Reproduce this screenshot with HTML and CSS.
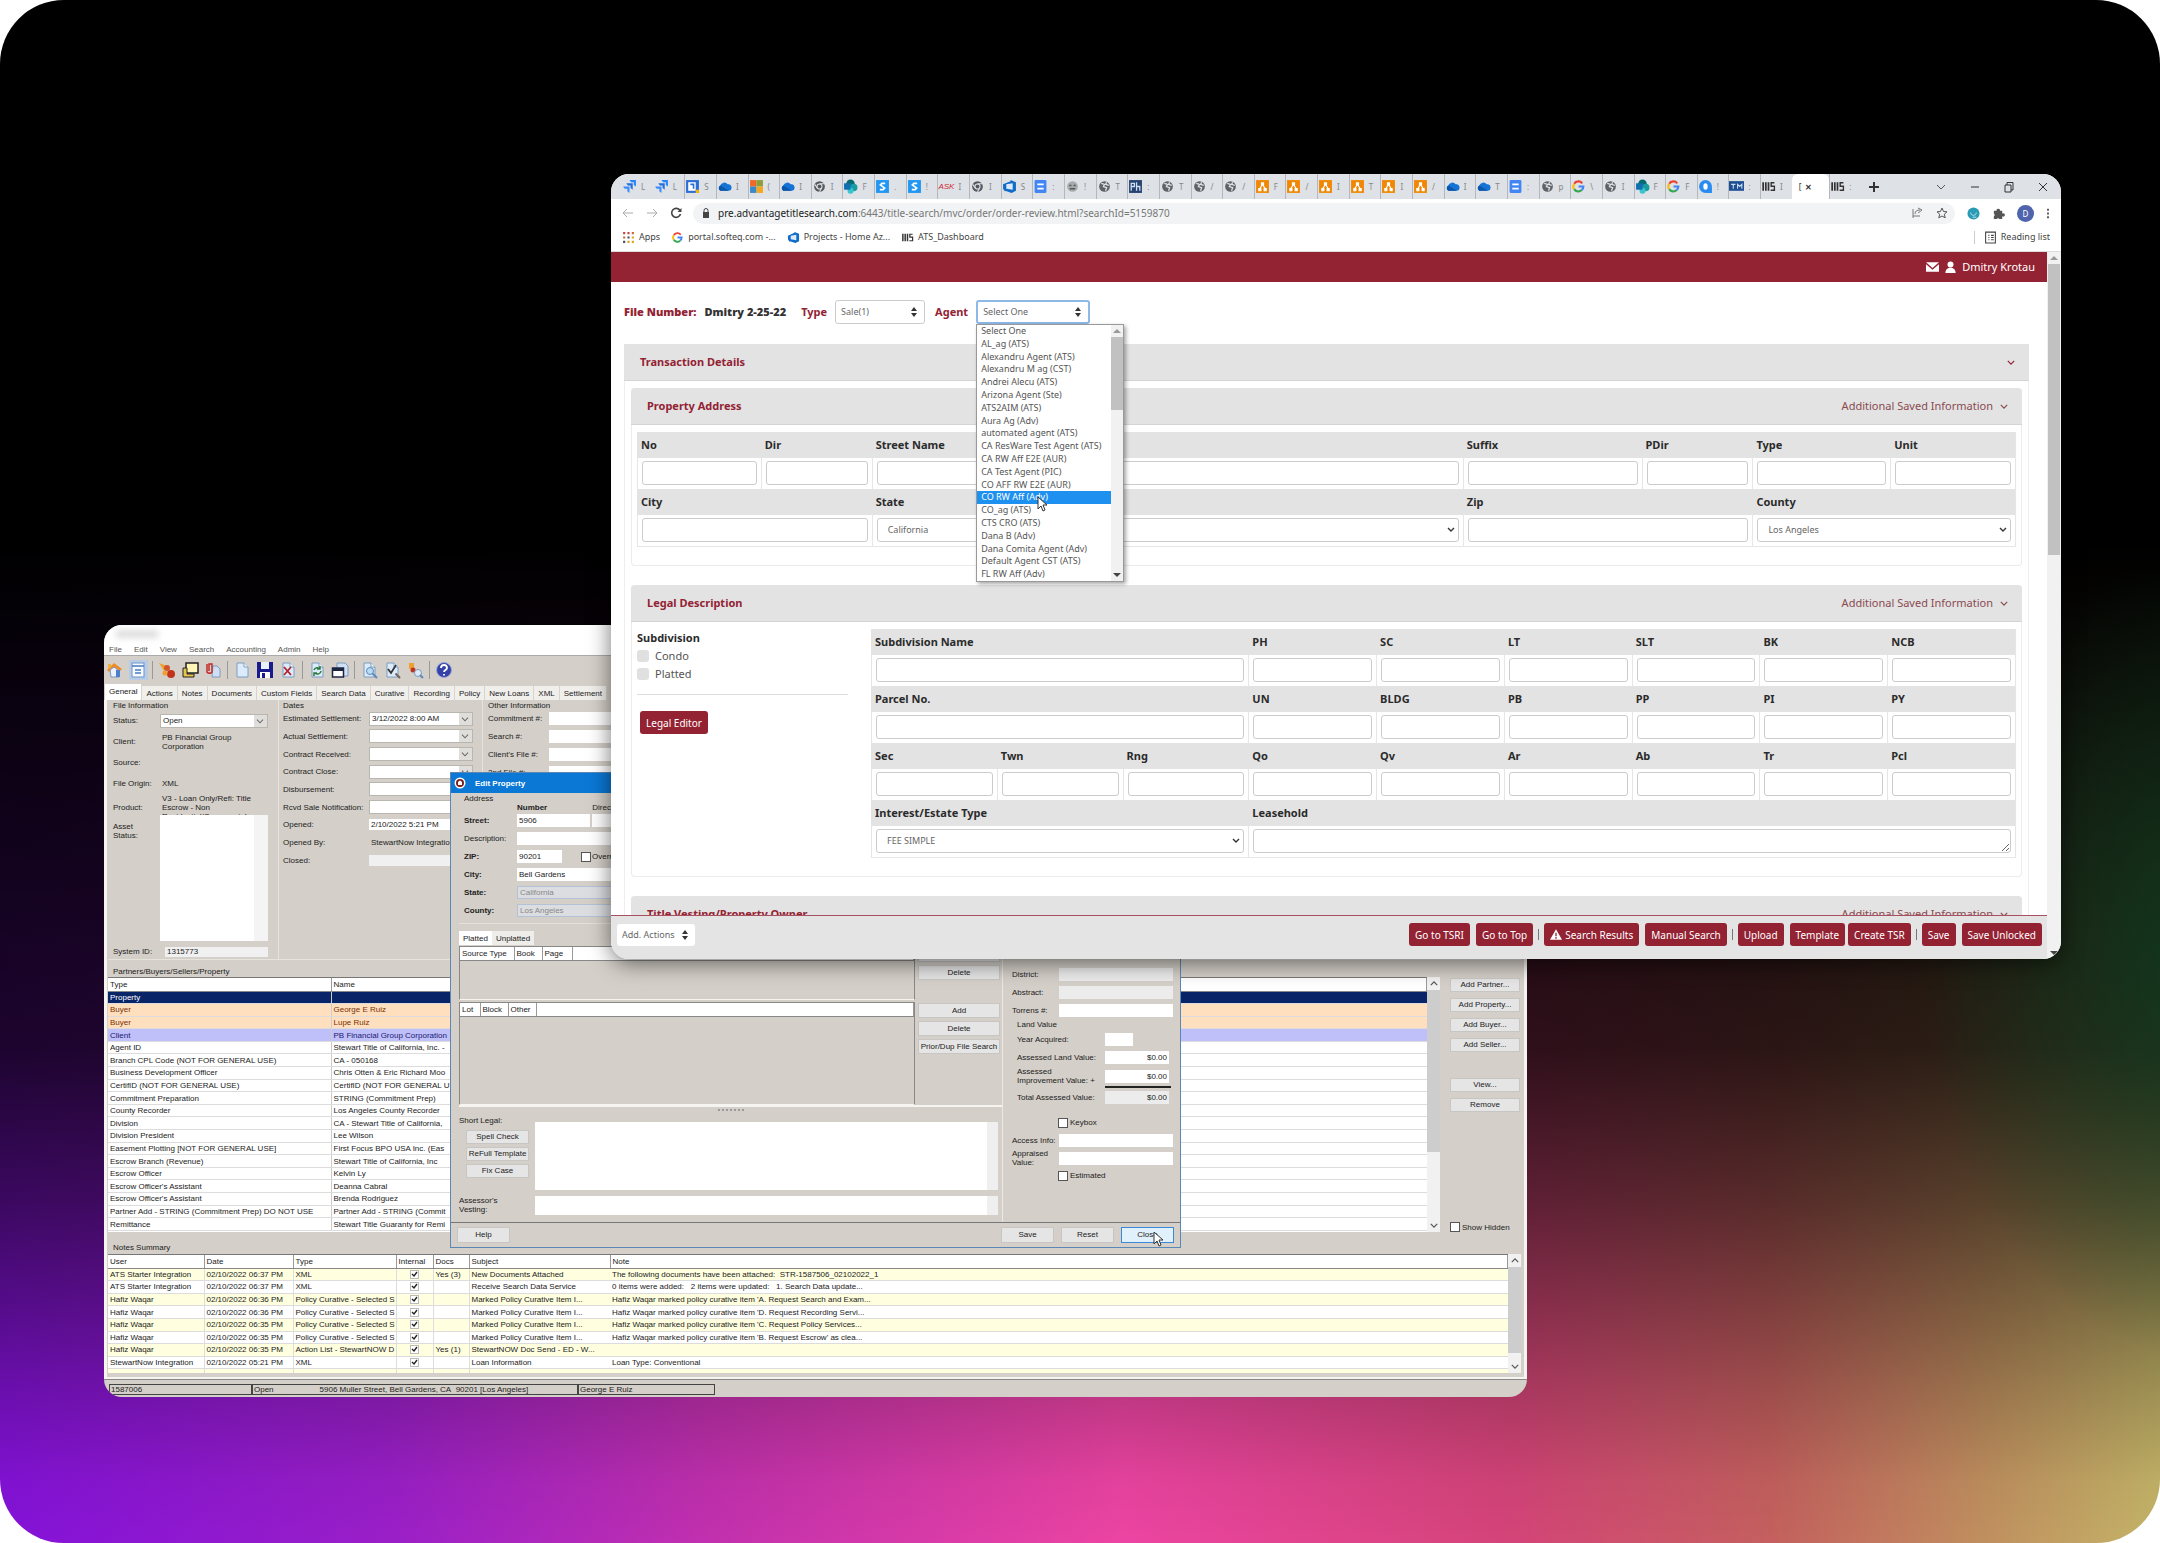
FILE: index.html
```html
<!DOCTYPE html>
<html lang="en">
<head>
<meta charset="utf-8">
<title>Title search</title>
<link rel="stylesheet" href="styles.css">
</head>
<body>
<svg class="defs" aria-hidden="true">
  <symbol id="jira" viewBox="0 0 14 14"><path d="M7 1h6v6l-2-1.500V3H8.500z" fill="#2684ff"/><path d="M4 4h6v6L8 8.500V6H5.500z" fill="#1f6fe0"/><path d="M1 7h6v6L5 11.500V9H2.500z" fill="#3b8cff"/></symbol>
  <symbol id="cal" viewBox="0 0 14 14"><rect x="1" y="1" width="12" height="12" fill="#2b6fd6"/><rect x="3" y="3" width="7" height="8" fill="#fff"/><path d="M5 5h3v4" fill="none" stroke="#2b6fd6" stroke-width="1.500"/><path d="M10 10h3v3h-3z" fill="#f4b400"/></symbol>
  <symbol id="cloud" viewBox="0 0 14 14"><path d="M3 11a3 3 0 0 1 0-5 4 4 0 0 1 7-1 3 3 0 0 1 1 6z" fill="#1473d4"/><path d="M3 11a3 3 0 0 1 0-5l8 5z" fill="#0a56a8"/></symbol>
  <symbol id="ms" viewBox="0 0 14 14"><rect x="1" y="1" width="6" height="6" fill="#f0682a"/><rect x="7" y="1" width="6" height="6" fill="#8d9e3c"/><rect x="1" y="7" width="6" height="6" fill="#3b87c8"/><rect x="7" y="7" width="6" height="6" fill="#f3a71f"/></symbol>
  <symbol id="globe" viewBox="0 0 14 14"><circle cx="7" cy="7" r="5" fill="#5f6368"/><path d="M4 4l3 1-1 2 3 1-1 3M9 3l-1 2 3 1" fill="none" stroke="#dee1e6" stroke-width="1.200"/></symbol>
  <symbol id="chrome" viewBox="0 0 14 14"><circle cx="7" cy="7" r="5" fill="#55585c"/><circle cx="7" cy="7" r="2.400" fill="#55585c" stroke="#dee1e6"/><path d="M7 4.500h5M5 8.500L2.500 5M9 8.500L7 12" stroke="#dee1e6"/></symbol>
  <symbol id="sp" viewBox="0 0 14 14"><circle cx="7" cy="4.500" r="4" fill="#036c70"/><circle cx="10" cy="8" r="3.500" fill="#1a9ba1"/><circle cx="7" cy="11" r="2.800" fill="#37c6d0"/><rect x="1" y="4" width="6" height="6" fill="#0f6fb0"/></symbol>
  <symbol id="sq" viewBox="0 0 14 14"><rect x="1" y="1" width="12" height="12" fill="#2196f3"/><path d="M9.500 4h-3L5 5.500 9 8.500 7.500 10h-3" fill="none" stroke="#fff" stroke-width="1.600"/></symbol>
  <symbol id="devops" viewBox="0 0 14 14"><path d="M1 5l7-3v-1l5 2v8l-4 2-6-2v1L1 9z" fill="#0f6cc9"/><path d="M4 5l6-1v6l-6-1z" fill="#dee9f8"/></symbol>
  <symbol id="doc" viewBox="0 0 14 14"><rect x="1.500" y="1" width="11" height="12" rx="1" fill="#4285f4"/><path d="M4 5h6M4 9h6" stroke="#fff" stroke-width="1.800"/></symbol>
  <symbol id="grey" viewBox="0 0 14 14"><circle cx="7" cy="7" r="5" fill="#a9abab"/><path d="M4 6h2M8 6h2M4.500 9h5" stroke="#54585a" stroke-width="1.400"/></symbol>
  <symbol id="ph" viewBox="0 0 14 14"><rect x="1" y="1" width="12" height="12" fill="#27436f"/><path d="M3 11V4h3v3H3M8 3v8M8 7h3v4" fill="none" stroke="#cfe0f4" stroke-width="1.200"/></symbol>
  <symbol id="draw" viewBox="0 0 14 14"><rect x="1" y="1" width="12" height="12" fill="#f08705"/><path d="M7 5L4.500 9M7 5l2.500 4" stroke="#fff"/><path d="M5.500 3h3v3h-3zM3 8.500h3v3H3zM8 8.500h3v3H8z" fill="#fff"/></symbol>
  <symbol id="goog" viewBox="0 0 14 14"><g fill="none" stroke-width="2"><path d="M10.500 4A4.500 4.500 0 0 0 3 4.500" stroke="#ea4335"/><path d="M3 4.500a4.500 4.500 0 0 0 0 5" stroke="#fbbc05"/><path d="M3 9.500a4.500 4.500 0 0 0 7 .8" stroke="#34a853"/><path d="M10 10.300A4.500 4.500 0 0 0 11.500 7H7" stroke="#4285f4"/></g></symbol>
  <symbol id="quip" viewBox="0 0 14 14"><circle cx="7" cy="7" r="6" fill="#2a8cf0"/><path d="M8 8h5v5H8z" fill="#2a8cf0"/><ellipse cx="7" cy="7" rx="2" ry="3" fill="#fff"/></symbol>
  <symbol id="tm" viewBox="0 0 14 14"><rect x="0" y="2" width="14" height="9" fill="#1e4f93"/><path d="M2 5h4M4 5v4M8 9V5l2 2 2-2v4" fill="none" stroke="#cfdef2"/></symbol>
  <symbol id="ats" viewBox="0 0 14 14"><path d="M2 3v8M4.500 3v8M7 3v8" stroke="#333" stroke-width="1.600"/><path d="M12.500 3.500h-3v3.200h3v3.800h-3.500" fill="none" stroke="#333" stroke-width="1.300"/></symbol>
  <symbol id="page" viewBox="0 0 18 18"><path d="M4 2h7l4 4v10H4z" fill="#dcebfa" stroke="#7d9dc0"/><path d="M11 2v4h4" fill="#fff" stroke="#7d9dc0"/></symbol>
  <symbol id="cursor" viewBox="0 0 12 16"><path d="M1 1v12l3-3 2 5 2-1-2-5h4z" fill="#fff" stroke="#333"/></symbol>
  <symbol id="chev" viewBox="0 0 10 6"><path d="M1 1l4 4 4-4" fill="none" stroke="currentColor" stroke-width="1.500"/></symbol>
</svg>

<main class="stage">

<section class="legacy" aria-label="File manager">
  <div class="l-title"><span class="smudge"></span></div>
  <nav class="l-menu"><a href="#">File</a><a href="#">Edit</a><a href="#">View</a><a href="#">Search</a><a href="#">Accounting</a><a href="#">Admin</a><a href="#">Help</a></nav>
  <div class="l-tools">
    <button aria-label="Home"><svg viewBox="0 0 18 18"><path d="M1 9l7-7 8 6-2 2-6-4-5 5z" fill="#f08a24"/><path d="M4 9l4-3 5 4v6H5z" fill="#eef3fb" stroke="#7b95c4"/><path d="M10 9h4v7h-4z" fill="#4c7fd0"/><path d="M2 3h3v4H2z" fill="#e7b13a"/></svg></button>
    <button class="on" aria-label="File"><svg viewBox="0 0 18 18"><rect x="3" y="2" width="12" height="14" fill="#f6faff" stroke="#6d93c9"/><path d="M3 5h12M6 9h6M6 12h6" stroke="#4a7cc0" stroke-width="1.500"/></svg></button>
    <i class="sep"></i>
    <button aria-label="Partners"><svg viewBox="0 0 18 18"><path d="M1 2l8 3-3 5z" fill="#f0a030"/><circle cx="9" cy="7" r="3" fill="#d2552a"/><circle cx="13" cy="13" r="4" fill="#c0341c"/><circle cx="7" cy="12" r="2.500" fill="#f0a030"/></svg></button>
    <button aria-label="Notes"><svg viewBox="0 0 18 18"><rect x="5" y="2" width="12" height="10" fill="#fff6b8" stroke="#222" stroke-width="1.500"/><path d="M2 7v9h11v-3H6V7z" fill="#e6c64a" stroke="#222"/></svg></button>
    <button aria-label="Attach"><svg viewBox="0 0 18 18"><path d="M9 5h4l3 3v8H8z" fill="#cfe0f4" stroke="#7d9dc0"/><path d="M3 3v8a3 3 0 0 0 5 0V3H5v7" fill="none" stroke="#c22b2b" stroke-width="1.500"/></svg></button>
    <i class="sep"></i>
    <button aria-label="New"><svg><use href="#page"/></svg></button>
    <button aria-label="Save"><svg viewBox="0 0 18 18"><path d="M1 1h16v16H1z" fill="#1a1b8c"/><path d="M5 1h8v7H5z" fill="#e9f1fb"/><path d="M4 11h10v6H4z" fill="#fff"/><path d="M6 12h3v5H6z" fill="#1a1b8c"/></svg></button>
    <button aria-label="Delete"><svg viewBox="0 0 18 18"><use href="#page"/><path d="M5 6l7 8M12 6l-7 8" stroke="#b3202a" stroke-width="1.800"/></svg></button>
    <i class="sep"></i>
    <button aria-label="Refresh"><svg viewBox="0 0 18 18"><use href="#page"/><path d="M6 9a3.500 3.500 0 0 1 6-1M13 10a3.500 3.500 0 0 1-6 2M12 5v3H9M6 15v-3h3" fill="none" stroke="#2c7a3a" stroke-width="1.500"/></svg></button>
    <button aria-label="Window"><svg viewBox="0 0 18 18"><path d="M6 2h8l3 3v10H6z" fill="#cfe0f4" stroke="#7d9dc0"/><rect x="1.500" y="7" width="11" height="9" fill="#fff" stroke="#1c2540" stroke-width="1.500"/><path d="M1 7h12v3H1z" fill="#1c2540"/></svg></button>
    <i class="sep"></i>
    <button aria-label="Preview"><svg viewBox="0 0 18 18"><use href="#page"/><circle cx="10" cy="10" r="3.500" fill="#b9dcf5" stroke="#5d89b8"/><path d="M12.500 12.500L17 17" stroke="#5d89b8" stroke-width="2"/></svg></button>
    <button aria-label="Check"><svg viewBox="0 0 18 18"><use href="#page"/><path d="M5 8l3 4 5-8" fill="none" stroke="#333" stroke-width="1.800"/><path d="M12.500 12.500L17 17" stroke="#6f6258" stroke-width="2"/></svg></button>
    <button aria-label="Find people"><svg viewBox="0 0 18 18"><path d="M3 2h5v6H3z" fill="#f0a030"/><circle cx="7" cy="9" r="2.500" fill="#c0341c"/><circle cx="12" cy="12" r="3.500" fill="#dcebfa" stroke="#7d9dc0"/><path d="M14 14l3 3" stroke="#5d89b8" stroke-width="2"/></svg></button>
    <i class="sep"></i>
    <button aria-label="Help"><svg viewBox="0 0 18 18"><circle cx="9" cy="9" r="7.500" fill="#3543a8" stroke="#9aa6dc"/><path d="M6 7c0-4 6-4 6 0 0 2-3 2-3 4M9 13v1.500" fill="none" stroke="#fff" stroke-width="1.800"/></svg></button>
  </div>
  <nav class="l-tabs"><a class="cur" href="#">General</a><a href="#">Actions</a><a href="#">Notes</a><a href="#">Documents</a><a href="#">Custom Fields</a><a href="#">Search Data</a><a href="#">Curative</a><a href="#">Recording</a><a href="#">Policy</a><a href="#">New Loans</a><a href="#">XML</a><a href="#">Settlement</a></nav>

  <div class="l-body">
    <div class="l-info">
      <section class="grp file">
        <h3>File Information</h3>
        <label class="fr"><span>Status:</span><select><option>Open</option></select></label>
        <div class="fr"><span>Client:</span><b>PB Financial Group<br>Corporation</b></div>
        <div class="fr"><span>Source:</span></div>
        <div class="fr"><span>File Origin:</span><b>XML</b></div>
        <div class="fr"><span>Product:</span><b>V3 - Loan Only/Refi: Title<br>Escrow - Non<br>Residential/Commercial</b></div>
        <label class="fr asset"><span>Asset<br>Status:</span><textarea></textarea></label>
        <label class="fr sys"><span>System ID:</span><input value="1315773"></label>
      </section>
      <section class="grp dates">
        <h3>Dates</h3>
        <div class="drows">
          <label><span>Estimated Settlement:</span><select><option>3/12/2022 8:00 AM</option></select></label>
          <label><span>Actual Settlement:</span><select></select></label>
          <label><span>Contract Received:</span><select></select></label>
          <label><span>Contract Close:</span><select></select></label>
          <label><span>Disbursement:</span><select></select></label>
          <label><span>Rcvd Sale Notification:</span><select></select></label>
          <label><span>Opened:</span><input value="2/10/2022 5:21 PM"></label>
          <label><span>Opened By:</span><input class="flat" value="StewartNow Integration"></label>
          <label><span>Closed:</span><input class="off"></label>
        </div>
      </section>
      <section class="grp other">
        <h3>Other Information</h3>
        <div class="drows">
          <label><span>Commitment #:</span><input></label>
          <label><span>Search #:</span><input></label>
          <label><span>Client's File #:</span><input></label>
          <label><span>2nd File #:</span><input></label>
        </div>
      </section>
    </div>

    <h3 class="cap">Partners/Buyers/Sellers/Property</h3>
    <div class="partners">
      <div class="tbox">
      <table class="ptab">
        <thead><tr><th>Type</th><th>Name</th></tr></thead>
        <tbody>
        <tr class="sel"><td>Property</td><td></td></tr>
        <tr class="buy"><td>Buyer</td><td>George E Ruiz</td></tr>
        <tr class="buy"><td>Buyer</td><td>Lupe Ruiz</td></tr>
        <tr class="cli"><td>Client</td><td>PB Financial Group Corporation</td></tr>
        <tr><td>Agent ID</td><td>Stewart Title of California, Inc. -</td></tr>
        <tr><td>Branch CPL Code (NOT FOR GENERAL USE)</td><td>CA - 050168</td></tr>
        <tr><td>Business Development Officer</td><td>Chris Otten &amp; Eric Richard Moo</td></tr>
        <tr><td>CertifID (NOT FOR GENERAL USE)</td><td>CertifID (NOT FOR GENERAL U</td></tr>
        <tr><td>Commitment Preparation</td><td>STRING (Commitment Prep)</td></tr>
        <tr><td>County Recorder</td><td>Los Angeles County Recorder</td></tr>
        <tr><td>Division</td><td>CA - Stewart Title of California,</td></tr>
        <tr><td>Division President</td><td>Lee Wilson</td></tr>
        <tr><td>Easement Plotting [NOT FOR GENERAL USE]</td><td>First Focus BPO USA Inc. (Eas</td></tr>
        <tr><td>Escrow Branch (Revenue)</td><td>Stewart Title of California, Inc</td></tr>
        <tr><td>Escrow Officer</td><td>Kelvin Ly</td></tr>
        <tr><td>Escrow Officer's Assistant</td><td>Deanna Cabral</td></tr>
        <tr><td>Escrow Officer's Assistant</td><td>Brenda Rodriguez</td></tr>
        <tr><td>Partner Add - STRING (Commitment Prep) DO NOT USE</td><td>Partner Add - STRING (Commit</td></tr>
        <tr><td>Remittance</td><td>Stewart Title Guaranty for Remi</td></tr>
        </tbody>
      </table>
      </div>
      <div class="sbar"><svg class="up"><use href="#chev"/></svg><i class="thumb t1"></i><svg><use href="#chev"/></svg></div>
      <div class="acts">
        <button>Add Partner...</button><button>Add Property...</button><button>Add Buyer...</button><button>Add Seller...</button>
        <button class="brk">View...</button><button>Remove</button>
        <label><input type="checkbox">Show Hidden</label>
      </div>
    </div>

    <h3 class="cap notes-cap">Notes Summary</h3>
    <div class="notes">
      <div class="tbox">
      <table class="ntab">
        <colgroup><col class="c1"><col class="c2"><col class="c3"><col class="c4"><col class="c5"><col class="c6"><col></colgroup>
        <thead><tr><th>User</th><th>Date</th><th>Type</th><th>Internal</th><th>Docs</th><th>Subject</th><th>Note</th></tr></thead>
        <tbody>
        <tr><td>ATS Starter Integration</td><td>02/10/2022 06:37 PM</td><td>XML</td><td class="tick"><input type="checkbox" checked aria-label="Internal"></td><td>Yes (3)</td><td>New Documents Attached</td><td>The following documents have been attached:&nbsp; STR-1587506_02102022_1</td></tr>
        <tr><td>ATS Starter Integration</td><td>02/10/2022 06:37 PM</td><td>XML</td><td class="tick"><input type="checkbox" checked aria-label="Internal"></td><td></td><td>Receive Search Data Service</td><td>0 items were added:&nbsp;&nbsp; 2 items were updated:&nbsp;&nbsp; 1. Search Data update...</td></tr>
        <tr><td>Hafiz Waqar</td><td>02/10/2022 06:36 PM</td><td>Policy Curative - Selected S</td><td class="tick"><input type="checkbox" checked aria-label="Internal"></td><td></td><td>Marked Policy Curative Item I...</td><td>Hafiz Waqar marked policy curative item 'A. Request Search and Exam...</td></tr>
        <tr><td>Hafiz Waqar</td><td>02/10/2022 06:36 PM</td><td>Policy Curative - Selected S</td><td class="tick"><input type="checkbox" checked aria-label="Internal"></td><td></td><td>Marked Policy Curative Item I...</td><td>Hafiz Waqar marked policy curative item 'D. Request Recording Servi...</td></tr>
        <tr><td>Hafiz Waqar</td><td>02/10/2022 06:35 PM</td><td>Policy Curative - Selected S</td><td class="tick"><input type="checkbox" checked aria-label="Internal"></td><td></td><td>Marked Policy Curative Item I...</td><td>Hafiz Waqar marked policy curative item 'C. Request Policy Services...</td></tr>
        <tr><td>Hafiz Waqar</td><td>02/10/2022 06:35 PM</td><td>Policy Curative - Selected S</td><td class="tick"><input type="checkbox" checked aria-label="Internal"></td><td></td><td>Marked Policy Curative Item I...</td><td>Hafiz Waqar marked policy curative item 'B. Request Escrow' as clea...</td></tr>
        <tr><td>Hafiz Waqar</td><td>02/10/2022 06:35 PM</td><td>Action List - StewartNOW D</td><td class="tick"><input type="checkbox" checked aria-label="Internal"></td><td>Yes (1)</td><td>StewartNOW Doc Send - ED - W...</td><td></td></tr>
        <tr><td>StewartNow Integration</td><td>02/10/2022 05:21 PM</td><td>XML</td><td class="tick"><input type="checkbox" checked aria-label="Internal"></td><td></td><td>Loan Information</td><td>Loan Type: Conventional</td></tr>
        <tr><td>StewartNow Integration</td><td>02/10/2022 05:21 PM</td><td>New File</td><td></td><td></td><td>New Order</td><td></td></tr>
        </tbody>
      </table>
      </div>
      <div class="sbar"><svg class="up"><use href="#chev"/></svg><i class="thumb t2"></i><svg><use href="#chev"/></svg></div>
    </div>
  </div>
  <footer class="l-status"><span class="st-id">1587006</span><span class="st-main">Open<em>5906 Muller Street, Bell Gardens, CA&nbsp; 90201 [Los Angeles]</em></span><span class="st-who">George E Ruiz</span></footer>

  <section class="dialog" aria-label="Edit Property">
    <header><svg viewBox="0 0 12 12"><circle cx="6" cy="6" r="5.500" fill="#fff"/><circle cx="6" cy="6" r="4" fill="#7c2020"/><path d="M4 8V5l2-1.500L8 5v3z" fill="#fff"/></svg><h2>Edit Property</h2></header>
    <div class="d-main">
      <div class="d-left">
        <section class="addr">
          <h3>Address</h3>
          <div class="ahead"><strong>Number</strong><span>Direction</span></div>
          <div class="arows">
            <div><label for="st"><strong>Street:</strong></label><input id="st" class="w1" value="5906"><input aria-label="Direction" class="w2"></div>
            <div><label for="de">Description:</label><input id="de" class="w3"></div>
            <div><label for="zi"><strong>ZIP:</strong></label><input id="zi" class="w4" value="90201"><label class="ck"><input type="checkbox">Override</label></div>
            <div><label for="ci"><strong>City:</strong></label><input id="ci" class="w3" value="Bell Gardens"></div>
            <div><label for="sta"><strong>State:</strong></label><select id="sta" class="w3" disabled><option>California</option></select></div>
            <div><label for="co"><strong>County:</strong></label><select id="co" class="w3" disabled><option>Los Angeles</option></select></div>
          </div>
        </section>
        <nav class="d-tabs"><a class="cur" href="#">Platted</a><a href="#">Unplatted</a></nav>
        <div class="lots f1">
          <div class="grid"><table><tr><th class="k1">Source Type</th><th class="k2">Book</th><th class="k3">Page</th><th></th></tr></table></div>
          <div class="lb"><button>Add</button><button>Delete</button></div>
        </div>
        <div class="lots f2">
          <div class="grid"><table><tr><th class="k4">Lot</th><th class="k2">Block</th><th class="k2">Other</th><th></th></tr></table></div>
          <div class="lb"><button>Add</button><button>Delete</button><button>Prior/Dup File Search</button></div>
        </div>
        <div class="grip"></div>
        <div class="legal">
          <div class="lside"><label for="sl">Short Legal:</label><button>Spell Check</button><button>ReFull Template</button><button>Fix Case</button></div>
          <textarea id="sl"></textarea>
        </div>
        <div class="vest"><label for="av">Assessor's Vesting:</label><textarea id="av"></textarea></div>
      </div>
      <div class="d-right">
        <label><span>District:</span><input class="off"></label>
        <label><span>Abstract:</span><input class="off"></label>
        <label><span>Torrens #:</span><input></label>
        <h3>Land Value</h3>
        <label class="v"><span>Year Acquired:</span><input class="yr"></label>
        <label class="v"><span>Assessed Land Value:</span><input value="$0.00"></label>
        <label class="v imp"><span>Assessed<br>Improvement Value: +</span><input value="$0.00"></label>
        <label class="v"><span>Total Assessed Value:</span><input class="off" value="$0.00"></label>
        <label class="c first"><input type="checkbox">Keybox</label>
        <label><span>Access Info:</span><input></label>
        <label class="ap"><span>Appraised Value:</span><input></label>
        <label class="c"><input type="checkbox">Estimated</label>
      </div>
    </div>
    <footer><button>Help</button><i></i><button>Save</button><button>Reset</button><button class="hot">Close</button></footer>
    <svg class="cursor cb"><use href="#cursor"/></svg>
  </section>
</section>

<section class="browser" aria-label="Browser">
  <div class="strip">
    <div class="tabs">
      <span><svg><use href="#jira"/></svg>L</span><span><svg><use href="#jira"/></svg>L</span><span><svg><use href="#cal"/></svg>S</span><span><svg><use href="#cloud"/></svg>I</span><span><svg><use href="#ms"/></svg>(</span><span><svg><use href="#cloud"/></svg>I</span><span><svg><use href="#chrome"/></svg>I</span><span><svg><use href="#sp"/></svg>F</span><span><svg><use href="#sq"/></svg>.</span><span><svg><use href="#sq"/></svg>!</span><span><b class="ask">ASK</b>I</span><span><svg><use href="#chrome"/></svg>I</span><span><svg><use href="#devops"/></svg>S</span><span><svg><use href="#doc"/></svg>:</span><span><svg><use href="#grey"/></svg>!</span><span><svg><use href="#globe"/></svg>T</span><span><svg><use href="#ph"/></svg>:</span><span><svg><use href="#globe"/></svg>T</span><span><svg><use href="#globe"/></svg>/</span><span><svg><use href="#globe"/></svg>/</span><span><svg><use href="#draw"/></svg>F</span><span><svg><use href="#draw"/></svg>/</span><span><svg><use href="#draw"/></svg>I</span><span><svg><use href="#draw"/></svg>T</span><span><svg><use href="#draw"/></svg>I</span><span><svg><use href="#draw"/></svg>/</span><span><svg><use href="#cloud"/></svg>I</span><span><svg><use href="#cloud"/></svg>T</span><span><svg><use href="#doc"/></svg>:</span><span><svg><use href="#globe"/></svg>p</span><span><svg><use href="#goog"/></svg>\</span><span><svg><use href="#globe"/></svg>I</span><span><svg><use href="#sp"/></svg>F</span><span><svg><use href="#goog"/></svg>F</span><span><svg><use href="#quip"/></svg>!</span><span><svg><use href="#tm"/></svg>:</span><span><svg><use href="#ats"/></svg>I</span><span class="cur">[<b>✕</b></span><span><svg><use href="#ats"/></svg>:</span>
    </div>
    <div class="ctl">
      <button aria-label="New tab"><svg viewBox="0 0 12 12"><path d="M6 1v10M1 6h10" stroke="#333" stroke-width="2"/></svg></button>
      <i></i>
      <button aria-label="Search tabs"><svg viewBox="0 0 12 12"><path d="M2 4l4 4 4-4" fill="none" stroke="#555"/></svg></button>
      <button aria-label="Minimize"><svg viewBox="0 0 12 12"><path d="M2 6h8" stroke="#333"/></svg></button>
      <button aria-label="Restore"><svg viewBox="0 0 12 12"><path d="M2 4h6v7H2zM4 4V1.500h6V9H8" fill="none" stroke="#333"/></svg></button>
      <button aria-label="Close"><svg viewBox="0 0 12 12"><path d="M2 2l8 8M10 2l-8 8" stroke="#333"/></svg></button>
    </div>
  </div>
  <div class="nav">
    <button aria-label="Back"><svg viewBox="0 0 12 12"><path d="M11 6H1M5 2L1 6l4 4" fill="none" stroke="#aaa"/></svg></button>
    <button aria-label="Forward"><svg viewBox="0 0 12 12"><path d="M1 6h10M7 2l4 4-4 4" fill="none" stroke="#aaa"/></svg></button>
    <button aria-label="Reload"><svg viewBox="0 0 12 12"><path d="M10 3.500A4.500 4.500 0 1 0 10.500 7" fill="none" stroke="#444" stroke-width="1.600"/><path d="M11.500 1v4h-4z" fill="#444"/></svg></button>
    <div class="url">
      <svg viewBox="0 0 10 12"><path d="M2 5h6v6H2z" fill="#444"/><path d="M3 5V3.500a2 2 0 0 1 4 0V5" fill="none" stroke="#444"/></svg>
      <p>pre.advantagetitlesearch.com<span>:6443/title-search/mvc/order/order-review.html?searchId=5159870</span></p>
      <svg viewBox="0 0 12 12"><path d="M1 2v9M1 9h7M3 7c0-3 2-4 5-4M6 1l4 2-4 3" fill="none" stroke="#777"/></svg>
      <svg viewBox="0 0 12 12"><path d="M6 1l1.500 3.500 3.500.3-2.700 2.400.9 3.600L6 9l-3.200 1.800.9-3.600L1 4.800l3.500-.3z" fill="none" stroke="#555"/></svg>
    </div>
    <svg class="ext" viewBox="0 0 14 14"><circle cx="7" cy="7" r="6.500" fill="#2a9bb5"/><path d="M4 6c0 4 6 4 6 0M6 11h4" fill="none" stroke="#bfe6f0"/></svg>
    <svg class="ext" viewBox="0 0 14 14"><path d="M2 4h3a1.800 1.800 0 1 1 3.500 0H11v3a1.800 1.800 0 1 1 0 3v3H8a1.800 1.800 0 0 0-3 0H2v-3a1.800 1.800 0 0 0 0-3z" fill="#555"/></svg>
    <span class="ava">D</span>
    <svg class="ext dots" viewBox="0 0 4 14"><path d="M1 2h2v2H1zM1 6h2v2H1zM1 10h2v2H1z" fill="#555"/></svg>
  </div>
  <div class="marks">
    <a href="#"><svg viewBox="0 0 12 12"><path d="M1 1h2v2H1zM5 1h2v2H5z" fill="#c44"/><path d="M9 1h2v2H9zM1 5h2v2H1z" fill="#c66b33"/><path d="M5 5h2v2H5zM1 9h2v2H1z" fill="#44546a"/><path d="M9 5h2v2H9zM5 9h2v2H5zM9 9h2v2H9z" fill="#d9a520"/></svg>Apps</a>
    <a href="#"><svg><use href="#goog"/></svg>portal.softeq.com -...</a>
    <a href="#"><svg><use href="#devops"/></svg>Projects - Home Az...</a>
    <a href="#"><svg><use href="#ats"/></svg>ATS_Dashboard</a>
    <a class="rl" href="#"><svg viewBox="0 0 12 12"><path d="M1.500 1h9v10h-9zM4 4h1M6.500 4H9M4 6h1M6.500 6H9M4 8h1M6.500 8H9" fill="none" stroke="#444"/></svg>Reading list</a>
  </div>
  <div class="view">
    <div class="pagecol">
      <header class="red"><svg viewBox="0 0 14 12"><path d="M0 1h14l-7 6z" fill="#fff"/><path d="M0 3l7 6 7-6v8H0z" fill="#fff"/></svg><svg viewBox="0 0 12 14"><circle cx="6" cy="4" r="3.500" fill="#fff"/><path d="M0 14c0-8 12-8 12 0z" fill="#fff"/></svg><span>Dmitry Krotau</span></header>
      <div class="scroller">
        <div class="top">
          <strong class="r">File Number:</strong><strong>Dmitry 2-25-22</strong>
          <label class="r" for="ty">Type</label><select id="ty" class="ud"><option>Sale(1)</option></select>
          <label class="r ag" for="agn">Agent</label>
          <div class="agent">
            <select id="agn" class="ud focus"><option>Select One</option></select>
            <div class="list">
              <ul role="listbox">
                <li>Select One</li><li>AL_ag (ATS)</li><li>Alexandru Agent (ATS)</li><li>Alexandru M ag (CST)</li><li>Andrei Alecu (ATS)</li><li>Arizona Agent (Ste)</li><li>ATS2AIM (ATS)</li><li>Aura Ag (Adv)</li><li>automated agent (ATS)</li><li>CA ResWare Test Agent (ATS)</li><li>CA RW Aff E2E (AUR)</li><li>CA Test Agent (PIC)</li><li>CO AFF RW E2E (AUR)</li><li class="hl">CO RW Aff (Adv)</li><li>CO_ag (ATS)</li><li>CTS CRO (ATS)</li><li>Dana B (Adv)</li><li>Dana Comita Agent (Adv)</li><li>Default Agent CST (ATS)</li><li>FL RW Aff (Adv)</li>
              </ul>
              <div class="lbar"><i class="tri u"></i><i class="lt"></i><i class="tri d"></i></div>
              <svg class="cursor ca"><use href="#cursor"/></svg>
            </div>
          </div>
        </div>
        <div class="band"><h2>Transaction Details</h2><svg><use href="#chev"/></svg></div>
        <div class="wrap">
          <section class="panel">
            <header><h2>Property Address</h2><a href="#">Additional Saved Information <svg><use href="#chev"/></svg></a></header>
            <div class="pb">
              <div class="form pa">
                <label><span>No</span><input></label><label><span>Dir</span><input></label><label><span>Street Name</span><input></label><label><span>Suffix</span><input></label><label><span>PDir</span><input></label><label><span>Type</span><input></label><label><span>Unit</span><input></label>
                <label class="span2"><span>City</span><input></label><label><span>State</span><select><option>California</option></select></label><label class="span2"><span>Zip</span><input></label><label class="span2"><span>County</span><select><option>Los Angeles</option></select></label>
              </div>
            </div>
          </section>
          <section class="panel">
            <header><h2>Legal Description</h2><a href="#">Additional Saved Information <svg><use href="#chev"/></svg></a></header>
            <div class="pb two">
              <div class="sub">
                <h3>Subdivision</h3>
                <label><input type="checkbox">Condo</label>
                <label><input type="checkbox">Platted</label>
                <hr>
                <button class="btn">Legal Editor</button>
              </div>
              <div class="form la">
                <label class="span3"><span>Subdivision Name</span><input></label><label><span>PH</span><input></label><label><span>SC</span><input></label><label><span>LT</span><input></label><label><span>SLT</span><input></label><label><span>BK</span><input></label><label><span>NCB</span><input></label>
                <label class="span3"><span>Parcel No.</span><input></label><label><span>UN</span><input></label><label><span>BLDG</span><input></label><label><span>PB</span><input></label><label><span>PP</span><input></label><label><span>PI</span><input></label><label><span>PY</span><input></label>
                <label><span>Sec</span><input></label><label><span>Twn</span><input></label><label><span>Rng</span><input></label><label><span>Qo</span><input></label><label><span>Qv</span><input></label><label><span>Ar</span><input></label><label><span>Ab</span><input></label><label><span>Tr</span><input></label><label><span>Pcl</span><input></label>
                <label class="span3"><span>Interest/Estate Type</span><select><option>FEE SIMPLE</option></select></label><label class="span6"><span>Leasehold</span><textarea></textarea></label>
              </div>
            </div>
          </section>
          <section class="panel">
            <header><h2>Title Vesting/Property Owner</h2><a href="#">Additional Saved Information <svg><use href="#chev"/></svg></a></header>
          </section>
        </div>
      </div>
      <footer class="bar">
        <select class="ud" aria-label="Additional actions"><option>Add. Actions</option></select>
        <i class="fill"></i>
        <button class="btn">Go to TSRI</button><button class="btn">Go to Top</button><i class="pipe"></i>
        <button class="btn"><svg viewBox="0 0 14 12"><path d="M7 0l7 12H0z" fill="#fff"/><path d="M7 4v4M7 9v2" stroke="#932233" stroke-width="1.500"/></svg>Search Results</button><button class="btn">Manual Search</button><i class="pipe"></i>
        <button class="btn">Upload</button><button class="btn">Template</button><button class="btn near">Create TSR</button><i class="pipe"></i>
        <button class="btn">Save</button><button class="btn">Save Unlocked</button>
      </footer>
    </div>
    <div class="vbar"><i class="tri u"></i><i class="vt"></i><i class="tri d"></i></div>
  </div>
</section>
</main>
</body>
</html>
```

FILE: styles.css
```css
* { box-sizing: border-box; }
body { margin: 0; background: #fff; }
h2, h3, p, ul { margin: 0; padding: 0; font-weight: inherit; font-size: inherit; }
ul { list-style: none; }
a { color: inherit; text-decoration: none; }
button, input, select, textarea { font: inherit; color: inherit; margin: 0; border-radius: 0; }
svg { display: block; flex: none; }
.defs { position: absolute; width: 0; height: 0; }

.stage {
  position: relative;
  min-height: 100vh;
  border-radius: 64px;
  overflow: hidden;
  background:
    radial-gradient(ellipse 13% 26% at 102% 62%, rgba(12, 60, 32, .8), transparent),
    linear-gradient(180deg, #000 0, #000 35%, rgba(0, 0, 0, .9) 50%, rgba(0, 0, 0, .78) 68%, rgba(0, 0, 0, .55) 78%, rgba(0, 0, 0, .2) 90%, rgba(0, 0, 0, .04) 96%, transparent 100%),
    linear-gradient(90deg, #8412d8 0, #9a1fc8 18%, #c230ae 33%, #ec44a2 52%, #d44478 70%, #c4605e 82%, #c0905f 92%, #c4b468 100%);
}

/* ---------- desktop client ---------- */
.legacy {
  position: absolute;
  left: 104px;
  right: 633px;
  top: 625px;
  border-radius: 18px;
  overflow: hidden;
  background: #d4cfc8;
  color: #222;
  font: 8px/9px "Liberation Sans", sans-serif;
}
.l-title { height: 18px; background: #fff; padding: 5px 12px; }
.smudge { display: block; width: 42px; height: 8px; background: #ddd; filter: blur(3px); }
.l-menu { display: flex; gap: 12px; height: 13px; align-items: center; padding: 0 5px; background: #fff; border-bottom: 1px solid #aaa; color: #555; }
.l-tools { display: flex; align-items: center; height: 28px; padding: 0 2px; gap: 4px; }
.l-tools button { border: 0; padding: 0; background: none; width: 19px; height: 20px; }
.l-tools button.on { background: #b9cce6; }
.l-tools svg { width: 18px; height: 18px; }
.sep { width: 2px; height: 18px; border-left: 1px solid #999; }
.l-tabs { display: flex; height: 16px; align-items: flex-end; padding: 0 1px; }
.l-tabs a { padding: 3px 4px 2px; height: 14px; background: #f1efec; border-right: 1px solid #d8d4cc; }
.l-tabs .cur { height: 16px; background: #fff; }

.l-body { border: solid #f6f4f0; border-width: 0 3px 2px 3px; padding: 0 3px 4px 1px; }
.l-info { display: flex; height: 260px; }
.grp { border: solid #e6e2dc; border-width: 0 1px 1px 0; padding: 1px 0 0 5px; }
.grp h3 { height: 9px; }
.file { width: 171px; }
.fr { display: grid; grid-template-columns: 47px 108px; height: 21px; align-items: center; }
.fr b { font-weight: 400; padding-left: 2px; }
.fr select, .fr input, .fr textarea { border: 0; background: #fff; padding: 0 2px; min-width: 0; }
.fr select { height: 14px; }
.asset { height: 126px; align-items: start; }
.asset span { padding: 7px 0 0 0; }
.asset textarea { height: 126px; resize: none; border-right: 14px solid #f4f4f4; }
.sys input { height: 10px; background: #f0f0f0; margin: 0 0 0 5px; }
.legacy select { appearance: none; background: #fff url("data:image/svg+xml,%3Csvg xmlns='http://www.w3.org/2000/svg' width='13' height='13'%3E%3Cpath d='M0 0h13v13H0z' fill='%23e0dedb'/%3E%3Cpath d='M3 5l3 3 3-3' fill='none' stroke='%23666'/%3E%3C/svg%3E") no-repeat right center; border: 1px solid #b9b5af; padding: 0 2px; }
.dates { width: 204px; padding-left: 4px; }
.drows { display: grid; grid-auto-rows: 1fr; height: 159px; }
.drows label { display: grid; grid-template-columns: 86px 104px; align-items: center; }
.drows input { height: 11px; border: 0; padding: 0 2px; background: #fff; min-width: 0; }
.drows select { height: 14px; }
.drows .flat { background: none; }
.drows .off { background: #f0f0f0; }
.other { flex: 1; border-right: 0; }
.other .drows { height: 71px; }
.other .drows label { grid-template-columns: 61px 200px; }
.other .drows input { height: 13px; }

.cap { height: 17px; padding: 7px 5px 0; }
.tbox { flex: 1; overflow: hidden; background: #fff; border-top: 1px solid #777; min-width: 0; }
.legacy table { width: 100%; border-collapse: collapse; table-layout: fixed; }
.legacy th, .legacy td { padding: 0 2px; text-align: left; font-weight: 400; white-space: nowrap; border-bottom: 1px solid #dcdcdc; }
.legacy th { height: 13px; border-right: 1px solid #999; border-bottom-color: #888; background: #fff; }
.partners { display: flex; height: 255px; }
.ptab { height: 253px; }
.ptab th:first-child { width: 223px; }
.ptab td:first-child { border-right: 1px solid #ccc; }
.sel { background: #0a2468; color: #fff; }
.buy { background: #ffdfbe; color: #7a3000; }
.cli { background: #bfbffa; color: #202070; }
.sbar { width: 13px; background: #f1f1f1; display: flex; flex-direction: column; align-items: center; padding: 4px 0; gap: 4px; color: #555; }
.sbar svg { width: 8px; height: 5px; }
.sbar .up { transform: rotate(180deg); }
.thumb { width: 13px; background: #cdcdcd; margin-bottom: auto; }
.t1 { height: 162px; }
.t2 { height: 86px; }
.acts { width: 70px; margin: 1px 1px 0 10px; display: flex; flex-direction: column; gap: 6px; }
.legacy button { cursor: default; }
.acts button, .lb button, .lside button, .dialog footer button { border: 1px solid #c8c6c3; background: #e5e5e5; padding: 0; height: 14px; line-height: 10px; }
.acts .brk { margin-top: 20px; }
.acts label { margin-top: auto; display: flex; align-items: center; gap: 2px; white-space: nowrap; }
.legacy input[type=checkbox] { appearance: none; width: 10px; height: 10px; min-width: 0; padding: 0; background: #fff; border: 1px solid #555; }
.notes-cap { height: 22px; padding-top: 11px; }
.notes { display: flex; height: 119px; }
.ntab { height: 127px; }
.ntab .c1 { width: 96px; } .ntab .c2 { width: 89px; } .ntab .c3 { width: 103px; } .ntab .c4 { width: 37px; } .ntab .c5 { width: 36px; } .ntab .c6 { width: 141px; }
.ntab tbody tr:nth-child(odd) td { background: #ffffdf; }
.ntab td + td { border-left: 1px solid #ddd; }
.ntab td:last-child { border-left: 0; }
.ntab .tick input { display: block; width: 9px; height: 9px; margin: 0 auto; border-color: #bbb; background: #fff url("data:image/svg+xml,%3Csvg xmlns='http://www.w3.org/2000/svg' width='7' height='7'%3E%3Cpath d='M1 3l2 2 3-4' fill='none' stroke='%23222' stroke-width='1.400'/%3E%3C/svg%3E") no-repeat center; }
.l-status { display: flex; height: 18px; padding: 4px 5px 2px; border-top: 1px solid #888; }
.l-status span { height: 11px; border: 1px solid #444; padding: 0 1px; white-space: nowrap; }
.st-id { width: 143px; }
.st-main { width: 326px; }
.st-who { width: 137px; }
.st-main em { font-style: normal; margin-left: 46px; }

/* ---------- Edit Property dialog ---------- */
.dialog { position: absolute; left: 346px; top: 147px; width: 731px; border: 1px solid #5c87b5; background: #d4cfc8; }
.dialog header { height: 20px; display: flex; align-items: center; gap: 9px; padding: 0 3px; background: #0a78d4; color: #fff; font-weight: 700; }
.dialog header svg { width: 12px; height: 12px; }
.dialog input, .dialog textarea { border: 0; background: #fff; padding: 0 2px; }
.dialog .off { background: #ececec; }
.d-main { display: flex; height: 429px; }
.d-left { width: 551px; padding-left: 8px; }
.addr { padding: 1px 0 0 5px; height: 131px; border: solid #e4e0da; border-width: 0 0 1px 0; }
.ahead { display: flex; padding-left: 53px; height: 9px; gap: 45px; }
.arows { display: grid; grid-auto-rows: 1fr; height: 107px; }
.arows div { display: flex; align-items: center; }
.arows label:first-child { width: 53px; }
.arows input, .arows select { height: 13px; }
.arows .w1 { width: 73px; margin-right: 2px; } .arows .w2 { width: 60px; } .arows .w3 { width: 300px; } .arows .w4 { width: 45px; margin-right: 19px; }
.arows select { background: #dcdde0; border-color: #b4c2d8; color: #888; opacity: 1; }
.ck { display: flex; align-items: center; gap: 1px; }
.d-tabs { display: flex; height: 21px; align-items: flex-end; }
.d-tabs a { background: #efedea; padding: 3px 4px 1px; height: 14px; }
.d-tabs .cur { background: #fff; }
.lots { display: flex; gap: 3px; }
.grid { width: 456px; border: 1px solid #888; border-bottom-color: #f6f4f0; }
.k1 { width: 54px; } .k2 { width: 28px; } .k3 { width: 30px; } .k4 { width: 20px; }
.f1 { height: 54px; margin-top: 1px; }
.f2 { height: 105px; margin-top: 2px; border-bottom: 2px solid #f6f4f0; }
.lb { width: 82px; display: flex; flex-direction: column; gap: 3px; padding-top: 1px; }
.lb button { height: 15px; white-space: nowrap; }
.grip { width: 26px; height: 4px; margin: 0 auto 4px; border-bottom: 2px dotted #999; }
.legal { display: flex; height: 75px; align-items: flex-end; }
.lside { width: 76px; display: flex; flex-direction: column; gap: 3px; align-self: flex-start; }
.lside label { height: 12px; padding-top: 1px; }
.lside button { width: 63px; margin-left: 7px; }
.dialog textarea { resize: none; border-right: 11px solid #efefef; }
.legal textarea { width: 463px; height: 68px; }
.vest { display: flex; margin-top: 6px; }
.vest label { width: 76px; padding-right: 30px; }
.vest textarea { width: 463px; height: 19px; }
.d-right { flex: 1; display: flex; flex-direction: column; justify-content: flex-end; padding: 0 7px 38px 9px; border-left: 1px solid #ece9e4; }
.d-right label { display: grid; grid-template-columns: 47px 1fr; align-items: center; height: 18px; }
.d-right input { height: 13px; min-width: 0; }
.d-right h3 { height: 11px; padding: 1px 5px 0; }
.d-right .v { grid-template-columns: 88px 64px; padding-left: 5px; }
.v input { text-align: right; }
.v .yr { width: 28px; }
.d-right .imp { height: 22px; border-bottom: 2px solid transparent; background: linear-gradient(#222, #222) no-repeat 93px 100% / 66px 2px border-box; }
.d-right .c { display: flex; padding-left: 46px; gap: 2px; height: 17px; }
.d-right .first { margin-top: 8px; }
.dialog footer { display: flex; gap: 7px; align-items: center; height: 25px; padding: 0 6px; border-top: 1px solid #777; }
.dialog footer i { flex: 1; }
.dialog footer button { width: 53px; height: 16px; }
.dialog footer .hot { background: #e1f1fc; border-color: #3a88d8; }
.cursor { position: absolute; width: 12px; height: 16px; }
.cb { right: 15px; bottom: 0; }

/* ---------- browser ---------- */
.browser {
  position: absolute;
  left: 611px;
  right: 99px;
  top: 174px;
  border-radius: 18px;
  overflow: hidden;
  background: #fff;
  color: #444;
  font: 9px/12px "Noto Sans", sans-serif;
  box-shadow: 0 4px 22px rgba(0, 0, 0, .55);
}
.strip { display: flex; height: 25px; background: #dee1e6; }
.tabs { display: flex; flex: 1; padding-left: 10px; }
.tabs span { flex: 1 1 0; display: flex; align-items: center; gap: 4px; font-size: 8px; color: #888; border-left: 1px solid #b4b8be; white-space: nowrap; }
.tabs span:first-child, .tabs span:nth-child(2) { border-left-color: transparent; }
.tabs svg { width: 15px; height: 15px; }
.ask { color: #d02a34; font: italic 8px "Liberation Sans", sans-serif; }
.tabs .cur { background: #fff; border-radius: 6px 6px 0 0; padding-left: 7px; border: 0; color: #333; }
.ctl { width: 200px; display: flex; align-items: center; gap: 22px; padding: 0 12px 0 7px; }
.ctl i { flex: 1; }
.browser button { border: 0; background: none; padding: 0; }
.ctl svg, .nav svg { width: 12px; height: 12px; }
.nav { display: flex; align-items: center; height: 28px; gap: 12px; padding: 0 11px; }
.url { flex: 1; display: flex; align-items: center; gap: 6px; height: 21px; border-radius: 11px; background: #f1f3f4; padding: 0 7px; color: #222; font-size: 10px; margin: 0 0 0 -1px; }
.url svg:last-child { margin-left: 6px; }
.url p { flex: 1; }
.url span { color: #777; }
.nav .ext { width: 13px; height: 13px; }
.nav .dots { width: 4px; }
.ava { width: 17px; height: 17px; border-radius: 50%; background: #5063ad; color: #fff; text-align: center; line-height: 17px; font-size: 8px; }
.marks { display: flex; align-items: center; height: 25px; padding: 0 11px 4px; gap: 11px; border-bottom: 1px solid #ddd; }
.marks a { display: flex; align-items: center; gap: 4px; }
.marks svg { width: 13px; height: 13px; }
.marks .rl { margin-left: auto; border-left: 1px solid #ccc; padding-left: 9px; }

.view { display: flex; height: 707px; }
.pagecol { flex: 1; display: flex; flex-direction: column; min-width: 0; }
.red { height: 30px; background: #932233; color: #fff; display: flex; align-items: center; justify-content: flex-end; gap: 5px; padding-right: 12px; font-size: 11px; }
.red svg { width: 13px; height: 12px; }
.scroller { flex: 1; overflow: hidden; padding: 18px 18px 0 13px; }
.top { display: flex; align-items: center; height: 24px; margin-bottom: 20px; font-size: 11px; font-weight: 700; color: #333; }
.r { color: #932233; margin-right: 8px; }
.top strong + .r { margin-left: 15px; }
.ag { margin-left: 10px; }
.browser select, .browser textarea, .form input { border: 1px solid #ccc; border-radius: 3px; background: #fff; height: 24px; font-size: 9px; font-weight: 400; color: #666; }
.browser select { appearance: none; padding: 0 10px; background: #fff url("data:image/svg+xml,%3Csvg xmlns='http://www.w3.org/2000/svg' width='12' height='8'%3E%3Cpath d='M2 2l3 3 3-3' fill='none' stroke='%23333' stroke-width='1.400'/%3E%3C/svg%3E") no-repeat right center; }
.browser .ud { padding: 0 5px; background: #fff url("data:image/svg+xml,%3Csvg xmlns='http://www.w3.org/2000/svg' width='16' height='10'%3E%3Cpath d='M3 4l3-4 3 4zM3 6l3 4 3-4z' fill='%23333'/%3E%3C/svg%3E") no-repeat right center; }
#ty { width: 90px; }
.agent { position: relative; }
.browser .focus { width: 114px; border: 2px solid #8db8e8; display: block; }
.list { position: absolute; z-index: 2; left: 0; top: 24px; width: 148px; height: 258px; display: flex; background: #fff; border: 1px solid #999; box-shadow: 2px 2px 4px rgba(0, 0, 0, .35); font-size: 9px; font-weight: 400; color: #555; }
.list ul { flex: 1; display: grid; grid-auto-rows: 1fr; }
.list li { padding-left: 4px; white-space: nowrap; line-height: 12px; min-height: 0; }
.list .hl { background: #1e90f0; color: #fff; }
.lbar, .vbar { width: 12px; background: #f1f1f1; display: flex; flex-direction: column; align-items: center; padding: 4px 0; }
.lt { width: 12px; height: 73px; background: #c1c1c1; margin: 4px 0 auto; }
.tri { border: solid transparent; border-width: 0 4px; }
.tri.u { border-bottom: 4px solid #999; }
.tri.d { border-top: 4px solid #444; }
.ca { left: 60px; top: 171px; }
.band, .panel header { height: 37px; background: #e3e3e3; border-bottom: 1px solid #d4d4d4; display: flex; align-items: center; justify-content: space-between; font-size: 11px; color: #932233; }
.band { padding: 0 14px 0 16px; }
.band h2, .panel h2 { font-weight: 700; }
.band svg, .panel header svg { width: 8px; height: 5px; }
.wrap { border: solid #eee; border-width: 0 1px; padding: 7px 6px 0; }
.panel { margin-bottom: 19px; border: 1px solid #ececec; border-top: 0; border-radius: 4px; }
.panel header { padding: 0 14px 0 16px; margin: 0 -1px; border-radius: 4px 4px 0 0; }
.panel a { display: flex; align-items: center; gap: 7px; color: #8a4a50; }
.pb { padding: 7px 5px 18px; }
.form { display: grid; border: solid #e6e6e6; border-width: 0 1px 1px 0; }
.pa { grid-template-columns: 124fr 111fr 592fr 179fr 111fr 138fr 125fr; }
.la { flex: 1; grid-template-columns: 126fr 126fr 126fr repeat(6, 128fr); }
.form label { display: block; border-left: 1px solid #e6e6e6; min-width: 0; }
.form span { display: block; height: 26px; line-height: 26px; padding-left: 4px; background: #e3e3e3; margin-left: -1px; font-size: 11px; font-weight: 700; color: #2b2b2b; }
.form input, .form select, .form textarea { display: block; width: calc(100% - 8px); margin: 3px 4px 4px; }
.form textarea { min-height: 24px; resize: vertical; }
.span2 { grid-column: span 2; }
.span3 { grid-column: span 3; }
.span6 { grid-column: span 6; }
.two { display: flex; }
.sub { width: 234px; font-size: 11px; color: #555; }
.sub h3 { font-weight: 700; color: #2b2b2b; line-height: 18px; }
.sub label { display: flex; align-items: center; gap: 6px; height: 18px; }
.sub input { appearance: none; width: 12px; height: 12px; border-radius: 3px; background: #e0e0e0; }
.sub hr { width: 211px; margin: 11px 0 16px; border: 0; border-top: 1px solid #ddd; }
.browser .btn { height: 23px; background: #932233; color: #fff; border-radius: 3px; padding: 0 6px; font-size: 10px; display: flex; align-items: center; gap: 3px; white-space: nowrap; }
.sub .btn { margin-left: 3px; }
.bar { height: 44px; flex: none; border-top: 1px solid #a8505f; background: #e4e4e4; display: flex; gap: 6px; align-items: center; padding: 0 5px 6px 6px; }
.bar .ud { width: 78px; height: 22px; border: 0; }
.bar .fill { flex: 1; }
.bar .near { margin-left: -3px; }
.bar svg { width: 12px; height: 11px; }
.pipe { width: 1px; height: 11px; background: #777; margin: 0 -1px; }
.vbar { width: 14px; }
.vt { width: 12px; height: 291px; background: #c1c1c1; margin: 4px 0 auto; }
```
